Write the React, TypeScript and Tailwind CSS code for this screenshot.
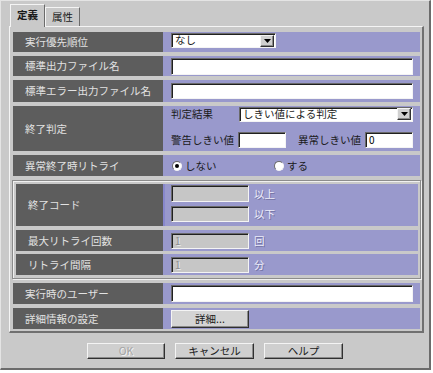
import React from "react";

const sunken =
  "border border-t-[#6a6a6a] border-l-[#6a6a6a] border-b-[#f4f4f4] border-r-[#f4f4f4] shadow-[inset_1px_1px_0_#202020]";
const raised =
  "border border-t-[#f4f4f4] border-l-[#f4f4f4] border-b-[#303030] border-r-[#303030] shadow-[inset_-1px_-1px_0_#8a8a8a]";

function Label({ text, w }: { text: string; w: string }) {
  return (
    <div className={`${w} shrink-0 bg-[#5d5d5d] text-[#e2e2e2] flex items-center pl-[12px]`}>
      {text}
    </div>
  );
}

function TextBox({ w, h = "h-[17px]", value = "", disabled = false }: { w: string; h?: string; value?: string; disabled?: boolean }) {
  return (
    <div
      className={`${w} ${h} ${sunken} ${disabled ? "bg-[#c6c6c6] text-[#8e8e8e] [text-shadow:1px_1px_0_#ececec]" : "bg-white text-black"} flex items-center pl-[3px] text-[10px] leading-none`}
    >
      {value}
    </div>
  );
}

function Select({ w, value }: { w: string; value: string }) {
  return (
    <div className={`${w} h-[15px] ${sunken} bg-white flex items-center justify-between`}>
      <span className="pl-[3px] leading-none">{value}</span>
      <div className={`w-[14px] h-[12px] mr-[1px] bg-[#d0d0d0] ${raised} flex items-center justify-center`}>
        <svg width="7" height="4" viewBox="0 0 7 4">
          <path d="M0 0h7L3.5 4z" fill="#000" />
        </svg>
      </div>
    </div>
  );
}

function Radio({ checked }: { checked: boolean }) {
  return (
    <div className="w-[10px] h-[10px] rounded-full bg-white border border-t-[#6a6a6a] border-l-[#6a6a6a] border-b-[#f4f4f4] border-r-[#f4f4f4] flex items-center justify-center">
      {checked && <div className="w-[4px] h-[4px] rounded-full bg-black" />}
    </div>
  );
}

function Dim({ text }: { text: string }) {
  return (
    <span className="text-[#ececfa] [text-shadow:1px_1px_0_#7272a4] ml-[5px]">{text}</span>
  );
}

export default function App() {
  return (
    <div className="w-[433px] h-[373px] bg-white font-['Noto_Sans_CJK_JP','Noto_Sans_CJK_SC',sans-serif] text-[10.5px] text-[#1a1a1a]">
      <div className="w-[431px] h-[370px] bg-[#c9c9c9] border-t border-l border-[#e4e4e4] border-r-2 border-b-2 border-r-[#6b6b6b] border-b-[#6b6b6b] pt-[3px] pl-[8px] flex flex-col">
        {/* tabs */}
        <div className="flex items-end h-[22px] pl-[1px]">
          <div className="relative z-10 w-[35px] h-[23px] mb-[-1px] bg-[#c9c9c9] border-t border-l border-[#f4f4f4] border-r border-r-[#6b6b6b] flex items-center justify-center font-bold pb-[2px]">
            定義
          </div>
          <div className="w-[35px] h-[19px] border-t border-l border-[#f4f4f4] border-r border-r-[#6b6b6b] flex items-center justify-center">
            属性
          </div>
        </div>

        {/* panel */}
        <div className="w-[415px] h-[307px] border-t border-l border-[#f4f4f4] border-r-2 border-b-2 border-r-[#707070] border-b-[#707070] pt-[5px] pl-[3px] pr-[2px] flex flex-col gap-[4px]">
          <div className="flex h-[20px]">
            <Label text="実行優先順位" w="w-[150px]" />
            <div className="flex-1 bg-[#9999cc] pl-[8px] pt-[1px]">
              <Select w="w-[105px]" value="なし" />
            </div>
          </div>

          <div className="flex h-[20px]">
            <Label text="標準出力ファイル名" w="w-[150px]" />
            <div className="flex-1 bg-[#9999cc] pl-[8px] pt-[2px]">
              <TextBox w="w-[242px]" />
            </div>
          </div>

          <div className="flex h-[22px]">
            <Label text="標準エラー出力ファイル名" w="w-[150px]" />
            <div className="flex-1 bg-[#9999cc] pl-[8px] pt-[3px]">
              <TextBox w="w-[242px]" h="h-[16px]" />
            </div>
          </div>

          <div className="flex h-[45px]">
            <Label text="終了判定" w="w-[150px]" />
            <div className="flex-1 bg-[#9999cc] pl-[8px] pt-[1px] flex flex-col">
              <div className="flex items-center h-[14px]">
                <span className="w-[68px]">判定結果</span>
                <Select w="w-[174px]" value="しきい値による判定" />
              </div>
              <div className="flex items-center h-[16px] mt-[11px]">
                <span className="w-[67px]">警告しきい値</span>
                <TextBox w="w-[48px]" h="h-[16px]" />
                <span className="w-[67px] ml-[12px]">異常しきい値</span>
                <TextBox w="w-[48px]" h="h-[16px]" value="0" />
              </div>
            </div>
          </div>

          <div className="flex h-[21px]">
            <Label text="異常終了時リトライ" w="w-[150px]" />
            <div className="flex-1 bg-[#9999cc] pl-[9px] flex items-center">
              <div className="w-[102px] flex items-center gap-[3px]">
                <Radio checked />
                <span>しない</span>
              </div>
              <div className="flex items-center gap-[3px]">
                <Radio checked={false} />
                <span>する</span>
              </div>
            </div>
          </div>

          {/* group */}
          <div className="h-[99px] mx-[-1px] border border-[#8c8c8c] shadow-[inset_1px_1px_0_#f0f0f0,1px_1px_0_#f0f0f0] pt-[3px] pl-[3px] pr-[2px] flex flex-col">
            <div className="flex h-[42px]">
              <Label text="終了コード" w="w-[147px]" />
              <div className="flex-1 bg-[#9999cc] pl-[6px] pt-[1px] flex flex-col gap-[4px] border-l-2 border-[#8888cc]">
                <div className="flex items-center">
                  <TextBox w="w-[78px]" disabled />
                  <Dim text="以上" />
                </div>
                <div className="flex items-center">
                  <TextBox w="w-[78px]" h="h-[16px]" disabled />
                  <Dim text="以下" />
                </div>
              </div>
            </div>
            <div className="flex h-[21px] mt-[4px]">
              <Label text="最大リトライ回数" w="w-[147px]" />
              <div className="flex-1 bg-[#9999cc] pl-[8px] flex items-center">
                <TextBox w="w-[78px]" h="h-[16px]" value="1" disabled />
                <Dim text="回" />
              </div>
            </div>
            <div className="flex h-[21px] mt-[3px]">
              <Label text="リトライ間隔" w="w-[147px]" />
              <div className="flex-1 bg-[#9999cc] pl-[8px] flex items-center">
                <TextBox w="w-[78px]" h="h-[16px]" value="1" disabled />
                <Dim text="分" />
              </div>
            </div>
          </div>

          <div className="flex h-[21px]">
            <Label text="実行時のユーザー" w="w-[150px]" />
            <div className="flex-1 bg-[#9999cc] pl-[8px] flex items-center">
              <TextBox w="w-[242px]" />
            </div>
          </div>

          <div className="flex h-[21px]">
            <Label text="詳細情報の設定" w="w-[150px]" />
            <div className="flex-1 bg-[#9999cc] pl-[8px] flex items-center">
              <div className={`w-[78px] h-[18px] bg-[#d4d4d4] ${raised} flex items-center justify-center`}>
                詳細...
              </div>
            </div>
          </div>
        </div>

        {/* buttons */}
        <div className="flex justify-center gap-[10px] mt-[10px] pr-[8px]">
          <div className={`w-[78px] h-[16px] bg-[#cfcfcf] ${raised} flex items-center justify-center text-[#a4a4a4] [text-shadow:1px_1px_0_#f4f4f4]`}>
            OK
          </div>
          <div className={`w-[79px] h-[16px] bg-[#cfcfcf] ${raised} flex items-center justify-center`}>
            キャンセル
          </div>
          <div className={`w-[79px] h-[16px] bg-[#cfcfcf] ${raised} flex items-center justify-center`}>
            ヘルプ
          </div>
        </div>
      </div>
    </div>
  );
}
